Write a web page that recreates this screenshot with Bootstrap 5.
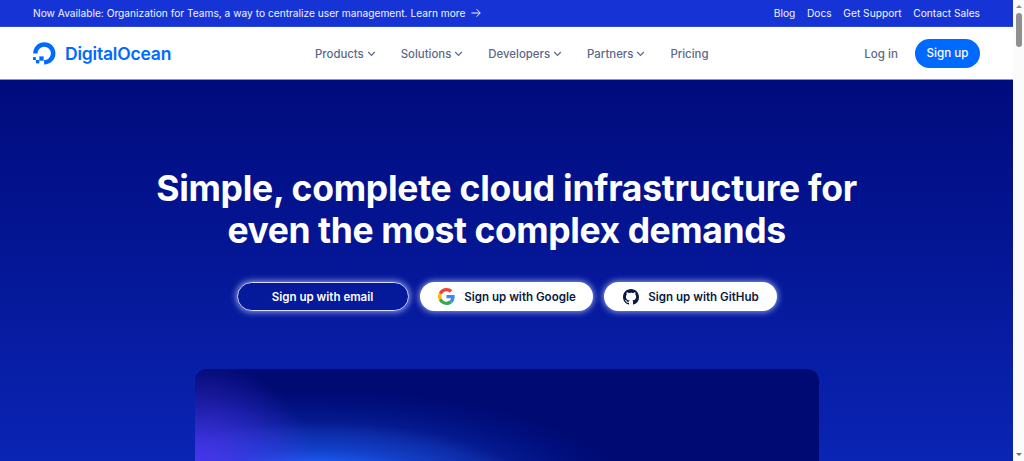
<!DOCTYPE html>
<html lang="en">
<head>
<meta charset="utf-8">
<title>DigitalOcean</title>
<link href="https://cdn.jsdelivr.net/npm/bootstrap@5.3.0/dist/css/bootstrap.min.css" rel="stylesheet">
<style>
html,body{height:461px;overflow:hidden}
body{font-family:Inter,"Liberation Sans",sans-serif;background:#fff}
.shell{height:461px}
.pagecol{flex:1 1 auto;min-width:0;height:461px;overflow:hidden}
.topbar{height:27px;background:#1633d6;color:#f1f4ff;font-size:10.2px;padding:2px 33px 0;border-bottom:1px solid #2c47dc}
.topbar a{color:#f1f4ff;text-decoration:none}
.promo{gap:6px}
.promo svg{margin-bottom:2px}
.toplinks{gap:11.7px}
.mainnav{height:53px;padding:0 33px;border-bottom:1px solid #8f93b4}
.brandname{color:#0069ff;font-size:17.5px;font-weight:600;letter-spacing:-.2px;text-decoration:none;gap:9px}
.brandword{padding-top:2px}
.menu{gap:25px;left:315px;padding-top:4px}
.menu a{color:#5b6987;font-size:11.4px;font-weight:500;text-decoration:none;gap:3px}
.menu svg{margin-bottom:2px}
.logbtn{color:#5b6987;font-size:11.6px;font-weight:500;text-decoration:none;padding-top:4px}
.navend{gap:17px}
.signbtn{background:#0069ff;color:#fff;font-size:11.6px;font-weight:500;border-radius:15px;height:29px;width:65px;border:0;padding:2px 0 0}
.hero{height:381px;background:linear-gradient(180deg,#000b7c 0%,#0a24b4 100%);padding-top:88px}
.headline{color:#fff;font-size:35.5px;line-height:42px;font-weight:700;letter-spacing:-.42px;text-align:center;margin:0}
.firstline{letter-spacing:-.27px}
.cta{gap:11px;margin-top:30px}
.ctabtn{height:29px;border-radius:15px;font-size:11.55px;font-weight:600;padding:2px 0 0;gap:9px;box-shadow:0 0 6px 1px rgba(190,205,255,.75)}
.ctabtn svg{margin-bottom:2px}
.ctaghost{width:172px;background:transparent;border:1px solid #d5dcff;color:#fff}
.ctasolid{background:#fff;border:0;color:#0b1b3f;padding-left:2px}
.ctagoogle{width:173px}
.ctagithub{width:173px}
.showcase{width:624px;height:120px;margin:58px 0 0 195px;border-radius:12px 12px 0 0;background-color:#000a73;background-image:radial-gradient(ellipse 120px 105px at 0 98px,#4b35ee,rgba(75,53,238,.55) 45%,rgba(75,53,238,0)),radial-gradient(ellipse 320px 110px at 120px 130px,#1a55e8 35%,#1240c8 45%,#0c2aa5 62%,#051a90 70%,#00107f 85%,#000a73 100%)}
.sbar{width:11px;flex:0 0 11px;height:461px;background:#fbfbfb;padding:5px 2px 5px 3px}
.sthumb{width:6px;height:34px;margin-top:5px;background:#8f8f8f;border-radius:3px}
.sup,.sdown{width:0;height:0;border-left:3px solid transparent;border-right:3px solid transparent}
.sup{border-bottom:3px solid #8a8a8a}
.sdown{border-top:3px solid #6f6f6f}
</style>
</head>
<body>
<div class="shell d-flex">
  <div class="pagecol">
    <div class="topbar d-flex align-items-center justify-content-between">
      <a href="#" class="promo d-flex align-items-center">Now Available: Organization for Teams, a way to centralize user management. Learn more
        <svg width="10" height="10" viewBox="0 0 10 10" fill="none" stroke="#f1f4ff" stroke-width="1"><path d="M.5 5h8.7M5.6 1.3 9.2 5 5.6 8.7"/></svg>
      </a>
      <div class="toplinks d-flex"><a href="#">Blog</a><a href="#">Docs</a><a href="#">Get Support</a><a href="#">Contact Sales</a></div>
    </div>
    <nav class="mainnav d-flex align-items-center position-relative">
      <a href="#" class="brandname d-flex align-items-center">
        <svg width="23" height="23" viewBox="0 0 24 24" fill="#0069ff"><path d="M11 23.4v-4.5a7 7 0 1 0-6.9-7H-.4A11.6 11.6 0 1 1 11 23.4Z" transform="translate(.6 0)"/><rect x="6.600" y="15" width="4.500" height="4.500"/><rect x="3" y="18.700" width="3.600" height="3.600"/><rect x="0" y="15.800" width="3" height="3"/></svg>
        <span class="brandword">DigitalOcean</span>
      </a>
      <div class="menu d-flex position-absolute">
        <a href="#" class="d-flex align-items-center">Products <svg width="9" height="6" viewBox="0 0 9 6" fill="none" stroke="#5b6987" stroke-width="1.200"><path d="m1.200 1 3.300 3.300L7.800 1"/></svg></a>
        <a href="#" class="d-flex align-items-center">Solutions <svg width="9" height="6" viewBox="0 0 9 6" fill="none" stroke="#5b6987" stroke-width="1.200"><path d="m1.200 1 3.300 3.300L7.800 1"/></svg></a>
        <a href="#" class="d-flex align-items-center">Developers <svg width="9" height="6" viewBox="0 0 9 6" fill="none" stroke="#5b6987" stroke-width="1.200"><path d="m1.200 1 3.300 3.300L7.800 1"/></svg></a>
        <a href="#" class="d-flex align-items-center">Partners <svg width="9" height="6" viewBox="0 0 9 6" fill="none" stroke="#5b6987" stroke-width="1.200"><path d="m1.200 1 3.300 3.300L7.800 1"/></svg></a>
        <a href="#">Pricing</a>
      </div>
      <div class="navend ms-auto d-flex align-items-center">
        <a href="#" class="logbtn">Log in</a>
        <button class="btn signbtn">Sign up</button>
      </div>
    </nav>
    <section class="hero">
      <h1 class="headline"><span class="firstline">Simple, complete cloud infrastructure for</span><br>even the most complex demands</h1>
      <div class="cta d-flex justify-content-center">
        <button class="btn ctabtn ctaghost">Sign up with email</button>
        <button class="btn ctabtn ctasolid ctagoogle d-flex align-items-center justify-content-center">
          <svg width="17" height="17" viewBox="0 0 48 48"><path fill="#EA4335" d="M24 9.500c3.500 0 6.700 1.200 9.200 3.600l6.900-6.900C35.900 2.400 30.500 0 24 0 14.600 0 6.500 5.400 2.600 13.200l8 6.200C12.400 13.700 17.700 9.500 24 9.500z"/><path fill="#4285F4" d="M47 24.500c0-1.600-.1-3.100-.4-4.500H24v9h12.900c-.6 3-2.200 5.500-4.700 7.200l7.700 6C44.400 37.900 47 31.800 47 24.500z"/><path fill="#FBBC05" d="M10.500 28.600A14.500 14.500 0 0 1 10.500 19.400l-8-6.200a24 24 0 0 0 0 21.600l8-6.200z"/><path fill="#34A853" d="M24 48c6.500 0 11.900-2.100 15.900-5.800l-7.700-6c-2.200 1.400-4.900 2.300-8.200 2.300-6.300 0-11.600-4.200-13.500-9.900l-8 6.200C6.500 42.600 14.600 48 24 48z"/></svg>
          Sign up with Google
        </button>
        <button class="btn ctabtn ctasolid ctagithub d-flex align-items-center justify-content-center">
          <svg width="16" height="16" viewBox="0 0 16 16" fill="#0b1b3f"><path d="M8 0C3.580 0 0 3.580 0 8c0 3.540 2.290 6.530 5.470 7.590.4.070.55-.17.55-.38 0-.19-.01-.82-.01-1.490-2.010.37-2.530-.49-2.690-.94-.09-.23-.48-.94-.82-1.130-.28-.15-.68-.52-.01-.53.630-.01 1.080.58 1.230.82.720 1.210 1.870.87 2.330.66.070-.52.280-.87.510-1.070-1.780-.2-3.640-.89-3.640-3.950 0-.87.310-1.590.820-2.150-.08-.2-.36-1.020.08-2.120 0 0 .67-.21 2.200.82.640-.18 1.320-.27 2-.27s1.360.09 2 .27c1.530-1.040 2.200-.82 2.200-.82.440 1.100.16 1.920.08 2.120.51.560.82 1.270.82 2.150 0 3.070-1.870 3.750-3.650 3.950.29.25.54.73.54 1.480 0 1.070-.01 1.930-.01 2.200 0 .21.150.46.550.38A8.010 8.010 0 0 0 16 8c0-4.420-3.580-8-8-8z"/></svg>
          Sign up with GitHub
        </button>
      </div>
      <div class="showcase"></div>
    </section>
  </div>
  <aside class="sbar d-flex flex-column">
    <div class="sup"></div>
    <div class="sthumb"></div>
    <div class="sdown mt-auto"></div>
  </aside>
</div>
<script src="https://cdn.jsdelivr.net/npm/bootstrap@5.3.0/dist/js/bootstrap.bundle.min.js"></script>
</body>
</html>
